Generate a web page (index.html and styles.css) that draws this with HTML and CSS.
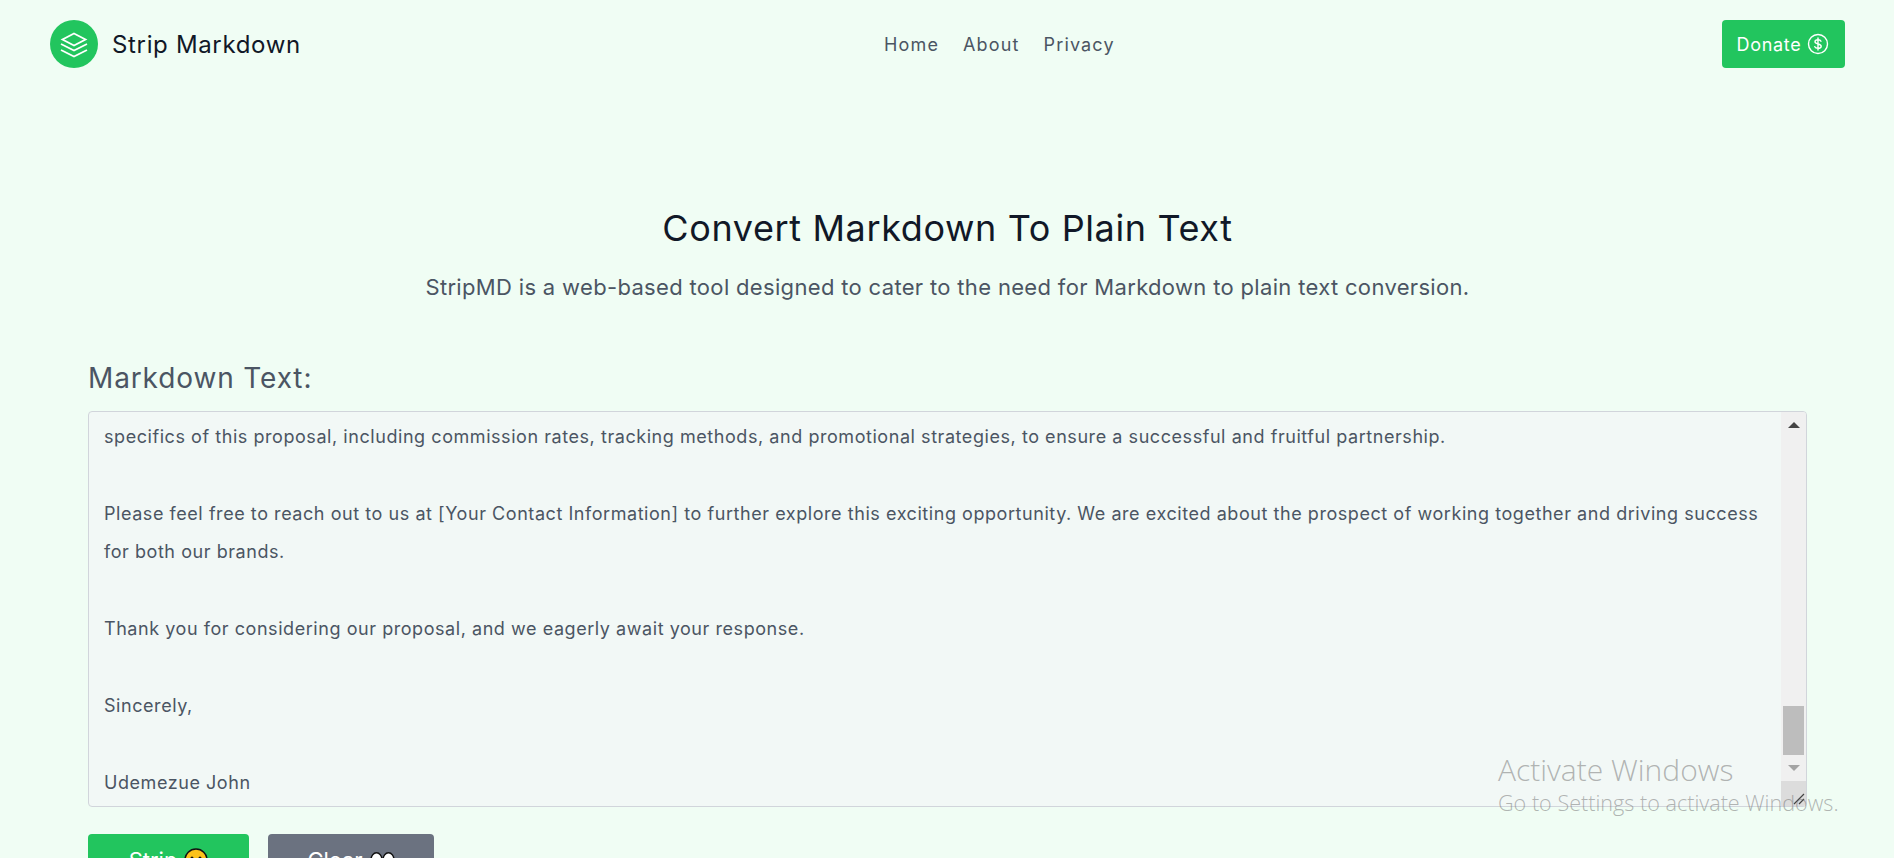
FILE: index.html
```html
<!DOCTYPE html>
<html lang="en">
<head>
<meta charset="utf-8">
<title>Strip Markdown</title>
<link rel="stylesheet" href="styles.css">
</head>
<body>
<header class="nav">
  <a class="brand">
    <span class="logo"><svg width="48" height="48" viewBox="0 0 48 48" fill="none" stroke="#fff" stroke-width="1.8"><path d="M24 13.500 35.500 19.500 24 25.500 12.500 19.500z"/><path d="M11 24l13 6.500L37 24"/><path d="M11 30l13 6.500L37 30"/></svg></span>
    <span class="brand-name">Strip Markdown</span>
  </a>
  <nav class="links"><a>Home</a><a>About</a><a>Privacy</a></nav>
  <button class="btn donate">Donate <svg width="24" height="24" viewBox="0 0 24 24" fill="none" stroke="#fff" stroke-width="1.4" stroke-linecap="round"><circle cx="12" cy="12" r="9.500"/><path d="M15 9.200c-.4-.9-1.500-1.500-3-1.500-1.800 0-3 .9-3 2.100 0 2.900 6.200 1.500 6.200 4.400 0 1.200-1.300 2.100-3.200 2.100-1.600 0-2.800-.6-3.200-1.600M12 6v12"/></svg></button>
</header>
<main class="main">
  <section class="hero">
    <h1>Convert Markdown To Plain Text</h1>
    <p>StripMD is a web-based tool designed to cater to the need for Markdown to plain text conversion.</p>
  </section>
  <section class="editor">
    <h2>Markdown Text:</h2>
    <div class="area">
      <div class="area-text">
        <p>specifics of this proposal, including commission rates, tracking methods, and promotional strategies, to ensure a successful and fruitful partnership.</p>
        <p>Please feel free to reach out to us at [Your Contact Information] to further explore this exciting opportunity. We are excited about the prospect of working together and driving success for both our brands.</p>
        <p>Thank you for considering our proposal, and we eagerly await your response.</p>
        <p>Sincerely,</p>
        <p>Udemezue John</p>
      </div>
      <div class="scrollbar">
        <span class="arrow up"></span>
        <div class="track"><span class="thumb"></span></div>
        <span class="arrow down"></span>
        <span class="corner"><svg width="14" height="14" viewBox="0 0 14 14" stroke="#444" stroke-width="1.2"><path d="M2 12 12 2M7 12l5-5"/></svg></span>
      </div>
    </div>
    <div class="actions">
      <button class="btn strip">Strip <svg class="emoji" width="24" height="24" viewBox="0 0 24 24"><circle cx="12" cy="12" r="11" fill="#fcc21b" stroke="#111" stroke-width="1.500"/><circle cx="8" cy="10" r="1.500" fill="#111"/><circle cx="16" cy="10" r="1.500" fill="#111"/></svg></button>
      <button class="btn clear">Clear <svg class="emoji" width="25" height="16" viewBox="0 0 25 16"><ellipse cx="6.500" cy="8" rx="5.500" ry="7.200" fill="#fff" stroke="#111" stroke-width="1.500"/><ellipse cx="18.500" cy="8" rx="5.500" ry="7.200" fill="#fff" stroke="#111" stroke-width="1.500"/></svg></button>
    </div>
  </section>
</main>
<aside class="watermark">
  <div class="wm-title">Activate Windows</div>
  <div class="wm-sub">Go to Settings to activate Windows.</div>
</aside>
</body>
</html>
```
FILE: styles.css
```css
* { box-sizing: border-box; }
html, body { margin: 0; height: 858px; overflow: hidden; }
body { background: #f0fdf4; font-family: Inter, "Liberation Sans", sans-serif; color: #4b5563; letter-spacing: .025em; position: relative; }
.nav { height: 88px; padding: 0 49px 0 50px; display: flex; align-items: center; justify-content: space-between; position: relative; }
.brand { display: flex; align-items: center; gap: 14px; }
.logo { width: 48px; height: 48px; border-radius: 50%; background: #22c55e; display: flex; align-items: center; justify-content: center; }
.brand-name { font-size: 24px; color: #111827; letter-spacing: .66px; }
.links { display: flex; gap: 24px; font-size: 18px; letter-spacing: 1.15px; position: absolute; left: 884px; top: 34px; }
.btn { border: 0; border-radius: 4px; color: #fff; font: inherit; font-size: 18px; display: inline-flex; align-items: center; justify-content: center; gap: 6px; }
.donate { background: #22c55e; width: 123px; height: 48px; letter-spacing: .7px; gap: 5px; }
.main { padding: 0 87px 0 88px; }
.hero { text-align: center; padding-top: 120px; }
.hero h1 { margin: 0; font-size: 36px; font-weight: 400; line-height: 40px; color: #111827; letter-spacing: .62px; }
.hero p { margin: 23px 0 0; font-size: 22px; line-height: 32px; letter-spacing: .33px; }
.editor { margin-top: 57px; }
.editor h2 { margin: 0 0 15px; font-size: 28px; line-height: 36px; font-weight: 400; letter-spacing: .87px; }
.area { height: 396px; border: 1px solid #d1d5db; border-radius: 4px; background: #f2f8f6; display: flex; overflow: hidden; }
.area-text { flex: 1; padding: 6px 15px 0; font-size: 18px; line-height: 38.4px; letter-spacing: .555px; height: 394px; overflow: hidden; }
.area-text p { margin: 0 0 38.4px; }
.scrollbar { width: 25px; background: #f0f0f0; display: flex; flex-direction: column; align-items: center; }
.arrow { width: 0; height: 0; border-left: 6px solid transparent; border-right: 6px solid transparent; flex: none; margin: 10px 0; }
.up { border-bottom: 6px solid #444; }
.down { border-top: 6px solid #a3a3a3; }
.track { flex: 1; width: 100%; display: flex; flex-direction: column; justify-content: flex-end; align-items: center; }
.thumb { width: 21px; height: 49px; background: #bdbdbd; display: block; }
.corner { width: 25px; height: 25px; background: #dcdcdc; display: flex; align-items: flex-end; justify-content: flex-end; flex: none; }
.actions { display: flex; gap: 19px; margin-top: 27px; }
.strip { background: #22c55e; width: 161px; height: 52px; font-size: 22px; gap: 7px; }
.clear { background: #6b7280; width: 166px; height: 52px; font-size: 22px; gap: 7px; }
.emoji { flex: none; }
.watermark { position: absolute; left: 1498px; top: 751px; font-family: "Open Sans", sans-serif; font-weight: 300; color: rgba(110,110,110,.5); letter-spacing: 0; }
.wm-title { font-size: 30px; line-height: 38px; }
.wm-sub { font-size: 21.600px; line-height: 28px; }
```
